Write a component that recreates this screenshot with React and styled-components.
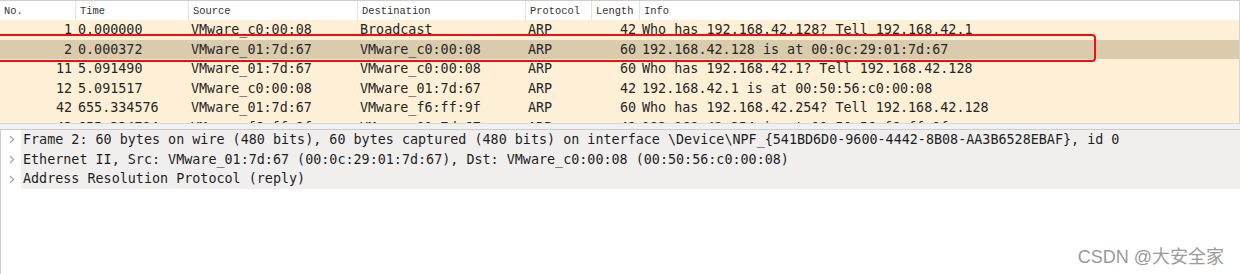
import React from "react";
import styled, { createGlobalStyle } from "styled-components";

const Global = createGlobalStyle`
  html, body { margin: 0; padding: 0; background: #ffffff; }
  body { width: 1240px; height: 274px; overflow: hidden; }
`;

const Page = styled.div`
  position: relative;
  width: 1240px;
  height: 274px;
  display: flex;
  flex-direction: column;
  overflow: hidden;
  background: #ffffff;
`;

const PacketList = styled.div`
  display: flex;
  flex-direction: column;
  flex: none;
  border-top: 1px solid #cdcdcd;
  border-right: 1px solid #d4d4d4;
  border-bottom: 1px solid #d8d8d8;
  height: 124px;
  box-sizing: border-box;
  overflow: hidden;
`;

const cols = "75px 113px 169px 168px 66px 48px 1fr";

const Header = styled.div`
  display: grid;
  grid-template-columns: ${cols};
  height: 19px;
  flex: none;
  background: #ffffff;
`;

const HeadCell = styled.div`
  font-family: "Liberation Mono", "Courier New", monospace;
  font-size: 10.4px;
  color: #333333;
  line-height: 20px;
  padding-left: 4px;
  border-left: ${(p) => (p.$first ? "none" : "1px solid #e4e4e4")};
  white-space: nowrap;
  overflow: hidden;
`;

const Body = styled.div`
  flex: 1;
  min-height: 0;
  overflow: hidden;
  background: #fdf0d6;
`;

const Row = styled.div`
  display: grid;
  grid-template-columns: ${cols};
  height: 19.5px;
  background: ${(p) => (p.$selected ? "#dbcbad" : "#fdf0d6")};
  font-family: "DejaVu Sans Mono", monospace;
  font-size: 13.4px;
  color: #262626;
  line-height: 19.5px;
`;

const Cell = styled.div`
  white-space: nowrap;
  overflow: visible;
  padding-left: ${(p) => (p.$right ? "0" : "4px")};
  padding-right: ${(p) => (p.$right ? "3px" : "0")};
  text-align: ${(p) => (p.$right ? "right" : "left")};
  margin-left: ${(p) => (p.$right ? "0" : "-1px")};
`;

const Splitter = styled.div`
  height: 5px;
  flex: none;
  background: #f0f0f0;
  border-bottom: 1px solid #cbcbcb;
`;

const Details = styled.div`
  flex: 1;
  border-left: 1px solid #cfcfcf;
  display: flex;
  flex-direction: column;
`;

const TreeRow = styled.div`
  display: flex;
  align-items: center;
  height: 19.7px;
`;

const Chevron = styled.span`
  width: 20px;
  flex: none;
  display: flex;
  align-items: center;
  justify-content: center;
  padding-left: 1px;
  box-sizing: border-box;
`;

const TreeText = styled.div`
  flex: 1;
  height: 100%;
  background: #f0efee;
  font-family: "DejaVu Sans Mono", monospace;
  font-size: 13.4px;
  color: #1e1e1e;
  line-height: 19.7px;
  padding-left: 2px;
  white-space: nowrap;
`;

const Highlight = styled.div`
  position: absolute;
  left: -4px;
  top: 34px;
  width: 1100px;
  height: 28px;
  box-sizing: border-box;
  border: 2px solid #f01010;
  border-radius: 4px;
  pointer-events: none;
`;

const Watermark = styled.div`
  position: absolute;
  right: 16px;
  bottom: 6px;
  font-family: "Liberation Sans", "Noto Sans CJK SC", sans-serif;
  font-size: 18px;
  color: #9a9a9a;
`;

const headers = ["No.", "Time", "Source", "Destination", "Protocol", "Length", "Info"];

const packets = [
  ["1", "0.000000", "VMware_c0:00:08", "Broadcast", "ARP", "42", "Who has 192.168.42.128? Tell 192.168.42.1"],
  ["2", "0.000372", "VMware_01:7d:67", "VMware_c0:00:08", "ARP", "60", "192.168.42.128 is at 00:0c:29:01:7d:67", true],
  ["11", "5.091490", "VMware_01:7d:67", "VMware_c0:00:08", "ARP", "60", "Who has 192.168.42.1? Tell 192.168.42.128"],
  ["12", "5.091517", "VMware_c0:00:08", "VMware_01:7d:67", "ARP", "42", "192.168.42.1 is at 00:50:56:c0:00:08"],
  ["42", "655.334576", "VMware_01:7d:67", "VMware_f6:ff:9f", "ARP", "60", "Who has 192.168.42.254? Tell 192.168.42.128"],
  ["43", "655.334794", "VMware_f6:ff:9f", "VMware_01:7d:67", "ARP", "42", "192.168.42.254 is at 00:50:56:f6:ff:9f"],
];

const details = [
  "Frame 2: 60 bytes on wire (480 bits), 60 bytes captured (480 bits) on interface \\Device\\NPF_{541BD6D0-9600-4442-8B08-AA3B6528EBAF}, id 0",
  "Ethernet II, Src: VMware_01:7d:67 (00:0c:29:01:7d:67), Dst: VMware_c0:00:08 (00:50:56:c0:00:08)",
  "Address Resolution Protocol (reply)",
];

const ChevronIcon = () => (
  <svg width="6" height="9" viewBox="0 0 6 9">
    <polyline points="1,1 4.5,4.5 1,8" fill="none" stroke="#a3a3a3" strokeWidth="1.2" />
  </svg>
);

export default function App() {
  return (
    <Page>
      <Global />
      <PacketList>
        <Header>
          {headers.map((h, i) => (
            <HeadCell key={h} $first={i === 0}>{h}</HeadCell>
          ))}
        </Header>
        <Body>
          {packets.map((p) => (
            <Row key={p[0]} $selected={p[7]}>
              <Cell $right>{p[0]}</Cell>
              <Cell>{p[1]}</Cell>
              <Cell>{p[2]}</Cell>
              <Cell>{p[3]}</Cell>
              <Cell>{p[4]}</Cell>
              <Cell $right>{p[5]}</Cell>
              <Cell>{p[6]}</Cell>
            </Row>
          ))}
        </Body>
      </PacketList>
      <Splitter />
      <Details>
        {details.map((d) => (
          <TreeRow key={d}>
            <Chevron><ChevronIcon /></Chevron>
            <TreeText>{d}</TreeText>
          </TreeRow>
        ))}
      </Details>
      <Highlight />
      <Watermark>CSDN @大安全家</Watermark>
    </Page>
  );
}
